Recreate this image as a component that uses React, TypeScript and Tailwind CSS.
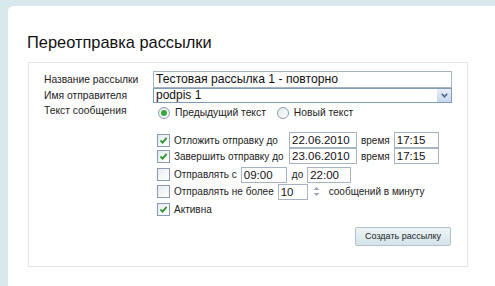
import React from "react";

const Check: React.FC<{ on?: boolean }> = ({ on }) => (
  <span className="w-[13px] h-[13px] border border-[#8a9bb0] bg-gradient-to-br from-[#e8ecf0] to-white flex items-center justify-center shrink-0">
    {on && (
      <svg width="9" height="9" viewBox="0 0 9 9">
        <path d="M1.5 4.5 L3.6 6.6 L7.6 1.8" fill="none" stroke="#2f9a2f" strokeWidth="1.8" />
      </svg>
    )}
  </span>
);

const Radio: React.FC<{ on?: boolean }> = ({ on }) => (
  <span className="w-[12px] h-[12px] rounded-full border border-[#8a9bb0] bg-gradient-to-br from-[#e4e9ee] to-white flex items-center justify-center shrink-0">
    {on && <span className="w-[6px] h-[6px] rounded-full bg-[#3aa63a]" />}
  </span>
);

const Field: React.FC<{ value: string; w: string }> = ({ value, w }) => (
  <span className={`${w} h-[16px] shrink-0 border border-[#a5b3c2] bg-white px-[2px] text-[11.5px] leading-[14px] text-[#111] whitespace-nowrap`}>
    {value}
  </span>
);

const App: React.FC = () => {
  return (
    <div className="w-[495px] h-[286px] bg-[#d9e8ec] pl-[8px] pt-[6px] font-['Liberation_Sans',Arial,sans-serif] overflow-hidden">
      <div className="bg-white h-full rounded-tl-[5px] pl-[20px] pt-[26px]">
        <h1 className="text-[16.4px] leading-[20px] text-[#111] mb-[10px] -ml-[1px]">Переотправка рассылки</h1>

        <div className="w-[440px] h-[205px] border border-[#e0e6e6] pl-[15px] pr-[15px] pt-[8px] text-[10.3px] text-[#222] whitespace-nowrap">
          {/* Name */}
          <div className="flex items-center h-[17px]">
            <span className="w-[109px]">Название рассылки</span>
            <span className="w-[299px] h-[17px] border border-[#a5b3c2] px-[2px] text-[12.2px] leading-[15px] text-[#111]">
              Тестовая рассылка 1 - повторно
            </span>
          </div>

          {/* Sender */}
          <div className="flex items-center h-[15px]">
            <span className="w-[109px]">Имя отправителя</span>
            <span className="w-[299px] h-[15px] border border-[#7f9db9] flex items-center">
              <span className="flex-1 px-[2px] text-[12px] leading-[13px] text-[#111]">podpis 1</span>
              <span className="w-[14px] h-[13px] bg-gradient-to-b from-[#e6eef8] to-[#c8d8ee] flex items-center justify-center">
                <svg width="7" height="5" viewBox="0 0 7 5">
                  <path d="M0.8 0.8 L3.5 3.8 L6.2 0.8" fill="none" stroke="#4d6185" strokeWidth="1.5" />
                </svg>
              </span>
            </span>
          </div>

          {/* Text type */}
          <div className="flex items-center h-[19px] pt-[1px]">
            <span className="w-[109px] -mt-[5px]">Текст сообщения</span>
            <span className="flex items-center gap-[5px] pl-[5px]">
              <Radio on />
              <span>Предыдущий текст</span>
              <span className="w-[1px]" />
              <Radio />
              <span>Новый текст</span>
            </span>
          </div>

          {/* Options */}
          <div className="pl-[113px] pt-[10px] flex flex-col text-[10px]">
            <div className="flex items-center h-[16px] gap-[4px]">
              <Check on />
              <span className="w-[111px]">Отложить отправку до</span>
              <Field value="22.06.2010" w="w-[68px]" />
              <span>время</span>
              <Field value="17:15" w="w-[45px]" />
            </div>
            <div className="flex items-center h-[16px] gap-[4px]">
              <Check on />
              <span className="w-[111px]">Завершить отправку до</span>
              <Field value="23.06.2010" w="w-[68px]" />
              <span>время</span>
              <Field value="17:15" w="w-[45px]" />
            </div>
            <div className="flex items-center h-[15px] gap-[4px] mt-[3px]">
              <Check />
              <span>Отправлять с</span>
              <Field value="09:00" w="w-[46px]" />
              <span className="ml-[1px]">до</span>
              <Field value="22:00" w="w-[44px]" />
            </div>
            <div className="flex items-center h-[15px] gap-[4px] mt-[2px]">
              <Check />
              <span>Отправлять не более</span>
              <Field value="10" w="w-[30px]" />
              <svg width="7" height="11" viewBox="0 0 7 11" className="ml-[1px]">
                <path d="M0.5 4 L3.5 1 L6.5 4 Z" fill="#9aa9bb" />
                <path d="M0.5 7 L3.5 10 L6.5 7 Z" fill="#9aa9bb" />
              </svg>
              <span className="ml-[5px]">сообщений в минуту</span>
            </div>
            <div className="flex items-center h-[15px] gap-[4px] mt-[3px]">
              <Check on />
              <span>Активна</span>
            </div>
          </div>

          <div className="flex justify-end mt-[10px] pr-[1px]">
            <button className="h-[19px] px-[9px] rounded-[2px] border border-[#b3c2c8] bg-gradient-to-b from-[#eef5f8] to-[#d3e4ea] text-[9px] leading-[17px] text-[#222] font-['Liberation_Sans',Arial,sans-serif]">
              Создать рассылку
            </button>
          </div>
        </div>
      </div>
    </div>
  );
};

export default App;
